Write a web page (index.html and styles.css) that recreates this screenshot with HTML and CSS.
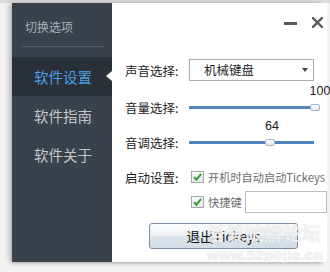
FILE: index.html
```html
<!DOCTYPE html>
<html lang="zh">
<head>
<meta charset="utf-8">
<link rel="stylesheet" href="styles.css">
</head>
<body>
<div class="stage">
  <div class="window">
    <aside class="sidebar">
      <div class="side-title">切换选项</div>
      <div class="side-divider"></div>
      <ul class="side-menu">
        <li class="side-item active">软件设置<span class="pointer"></span></li>
        <li class="side-item">软件指南</li>
        <li class="side-item">软件关于</li>
      </ul>
    </aside>
    <main class="panel">
      <div class="titlebar">
        <span class="btn-min"></span>
        <svg class="btn-close" width="11" height="11" viewBox="0 0 11 11"><path d="M1 1 L10 10 M10 1 L1 10" stroke="#5a5a5a" stroke-width="2.4" stroke-linecap="square"/></svg>
      </div>
      <div class="form">
        <div class="row row-select">
          <label class="lbl">声音选择:</label>
          <div class="select">机械键盘<span class="caret"></span></div>
        </div>
        <div class="row row-vol">
          <label class="lbl">音量选择:</label>
          <div class="slider">
            <div class="track"></div>
            <div class="thumb" style="left: calc(100% - 4px)"></div>
            <div class="val" style="left: calc(100% + 6px)">100</div>
          </div>
        </div>
        <div class="row row-pitch">
          <label class="lbl">音调选择:</label>
          <div class="slider">
            <div class="track"></div>
            <div class="thumb" style="left: calc(64.8% - 5px)"></div>
            <div class="val" style="left: calc(64.8% + 2px)">64</div>
          </div>
        </div>
        <div class="row row-start">
          <label class="lbl">启动设置:</label>
          <div class="check-line">
            <span class="checkbox"><svg width="12" height="12" viewBox="0 0 12 12"><path d="M2.2 6.2 L4.8 9 L10 2.6" fill="none" stroke="#3f9a3c" stroke-width="2.2"/></svg></span>
            <span class="check-text">开机时自动启动Tickeys</span>
          </div>
        </div>
        <div class="row row-hotkey">
          <span class="lbl"></span>
          <div class="check-line">
            <span class="checkbox"><svg width="12" height="12" viewBox="0 0 12 12"><path d="M2.2 6.2 L4.8 9 L10 2.6" fill="none" stroke="#3f9a3c" stroke-width="2.2"/></svg></span>
            <span class="check-text">快捷键</span>
            <span class="hotkey-input"></span>
          </div>
        </div>
        <div class="btn-row">
          <button class="quit">退出Tickeys</button>
        </div>
      </div>
    </main>
  </div>
  <div class="watermark">
    <div class="wm-big">吾爱破解论坛</div>
    <div class="wm-small">www.52pojie.cn</div>
  </div>
</div>
</body>
</html>
```

FILE: styles.css
```css
* { box-sizing: border-box; }
html, body {
  margin: 0;
  padding: 0;
}
body {
  width: 330px;
  height: 272px;
  overflow: hidden;
  background: #ebebeb;
  font-family: "Noto Sans CJK SC", "Noto Sans", sans-serif;
}
.stage {
  position: relative;
  width: 330px;
  height: 272px;
  padding: 3px 0 0 12px;
  background: linear-gradient(to bottom, #dcdcdc 0, #dcdcdc 3px, #f3f3f3 3px);
}
.window {
  display: flex;
  width: 311px;
  height: 259px;
  border-right: 1px solid #5e666c;
  box-shadow: -3px 0 5px rgba(0,0,0,0.22), 0 2px 3px rgba(0,0,0,0.15);
}
.sidebar {
  width: 100px;
  flex: none;
  background: #39424b;
  padding-top: 16px;
}
.side-title {
  font-size: 12px;
  line-height: 16px;
  color: #a9b0b7;
  padding-left: 13px;
}
.side-divider {
  height: 1px;
  background: #525b64;
  margin: 11px 8px 0 10px;
}
.side-menu {
  list-style: none;
  margin: 10px 0 0;
  padding: 0;
}
.side-item {
  position: relative;
  height: 39px;
  line-height: 39px;
  padding-left: 22px;
  font-size: 14.5px;
  color: #c3c7cb;
}
.side-item.active {
  background: #2a3037;
  color: #4b9fe8;
}
.pointer {
  position: absolute;
  right: 0;
  top: 14px;
  width: 0;
  height: 0;
  border-top: 5px solid transparent;
  border-bottom: 5px solid transparent;
  border-right: 6px solid #ffffff;
}
.panel {
  flex: 1;
  background: #ffffff;
  position: relative;
}
.titlebar {
  height: 56px;
  display: flex;
  justify-content: flex-end;
  align-items: flex-start;
  padding: 14px 4px 0 0;
  gap: 15px;
}
.btn-min {
  width: 13px;
  height: 3px;
  background: #5a5a5a;
  margin-top: 5px;
}
.btn-close {
  display: block;
}
.form {
  display: flex;
  flex-direction: column;
  padding-left: 13px;
}
.row {
  display: flex;
  align-items: center;
  height: 22px;
}
.row-vol { margin-top: 15px; }
.row-pitch { margin-top: 13px; }
.row-start { margin-top: 13px; }
.row-hotkey { margin-top: 3px; }
.lbl {
  width: 64px;
  flex: none;
  font-size: 12.5px;
  color: #1e1e1e;
  white-space: nowrap;
}
.select {
  position: relative;
  width: 125px;
  height: 22px;
  border: 1px solid #ababab;
  font-size: 12.5px;
  line-height: 20px;
  padding-left: 14px;
  color: #1e1e1e;
}
.caret {
  position: absolute;
  right: 5px;
  top: 8px;
  border-left: 3.5px solid transparent;
  border-right: 3.5px solid transparent;
  border-top: 4px solid #444;
}
.slider {
  position: relative;
  width: 125px;
  height: 22px;
}
.track {
  position: absolute;
  left: 0;
  right: 0;
  top: 10px;
  height: 3px;
  background: #5283bd;
}
.thumb {
  position: absolute;
  top: 8px;
  width: 10px;
  height: 7px;
  background: linear-gradient(#ffffff, #e6e6e6);
  border: 1px solid #9fb5cf;
  border-radius: 2px;
}
.val {
  position: absolute;
  top: -12px;
  transform: translateX(-50%);
  font-family: "Liberation Sans", Arial, sans-serif;
  font-size: 12.5px;
  line-height: 14px;
  color: #1a1a1a;
}
.check-line {
  display: flex;
  align-items: center;
  padding-left: 2px;
  flex: none;
  white-space: nowrap;
}
.checkbox {
  width: 13px;
  height: 12px;
  flex: none;
  border: 1px solid #a3a9a9;
  background: linear-gradient(#fafafa, #e8ecec);
  display: flex;
  align-items: center;
  justify-content: center;
}
.checkbox svg { display: block; }
.check-text {
  margin-left: 4px;
  font-size: 11.2px;
  color: #6d6d6d;
  flex: none;
}
.hotkey-input {
  width: 82px;
  height: 22px;
  flex: none;
  border: 1px solid #bdbdbd;
  background: #fff;
  margin-left: 3px;
}
.btn-row {
  margin-top: 10px;
  padding-left: 24px;
}
.quit {
  width: 149px;
  height: 26px;
  border: 1px solid #7d8ea3;
  border-radius: 3px;
  background: linear-gradient(#fbfcfd 0%, #eef2f6 50%, #dde5ed 51%, #d3dde8 100%);
  font-family: "Noto Sans CJK SC", "Noto Sans", sans-serif;
  font-size: 13.5px;
  color: #111;
  padding: 0;
  line-height: 24px;
}
.watermark {
  position: absolute;
  left: 207px;
  top: 219px;
  color: rgba(255,255,255,0.75);
  text-shadow: 0 0 1px rgba(140,140,140,0.45);
  pointer-events: none;
}
.wm-big {
  font-size: 19px;
  line-height: 28px;
  font-weight: bold;
}
.wm-small {
  font-family: "Liberation Sans", Arial, sans-serif;
  font-size: 15px;
  line-height: 16px;
  font-weight: bold;
  letter-spacing: 0.3px;
}
```
